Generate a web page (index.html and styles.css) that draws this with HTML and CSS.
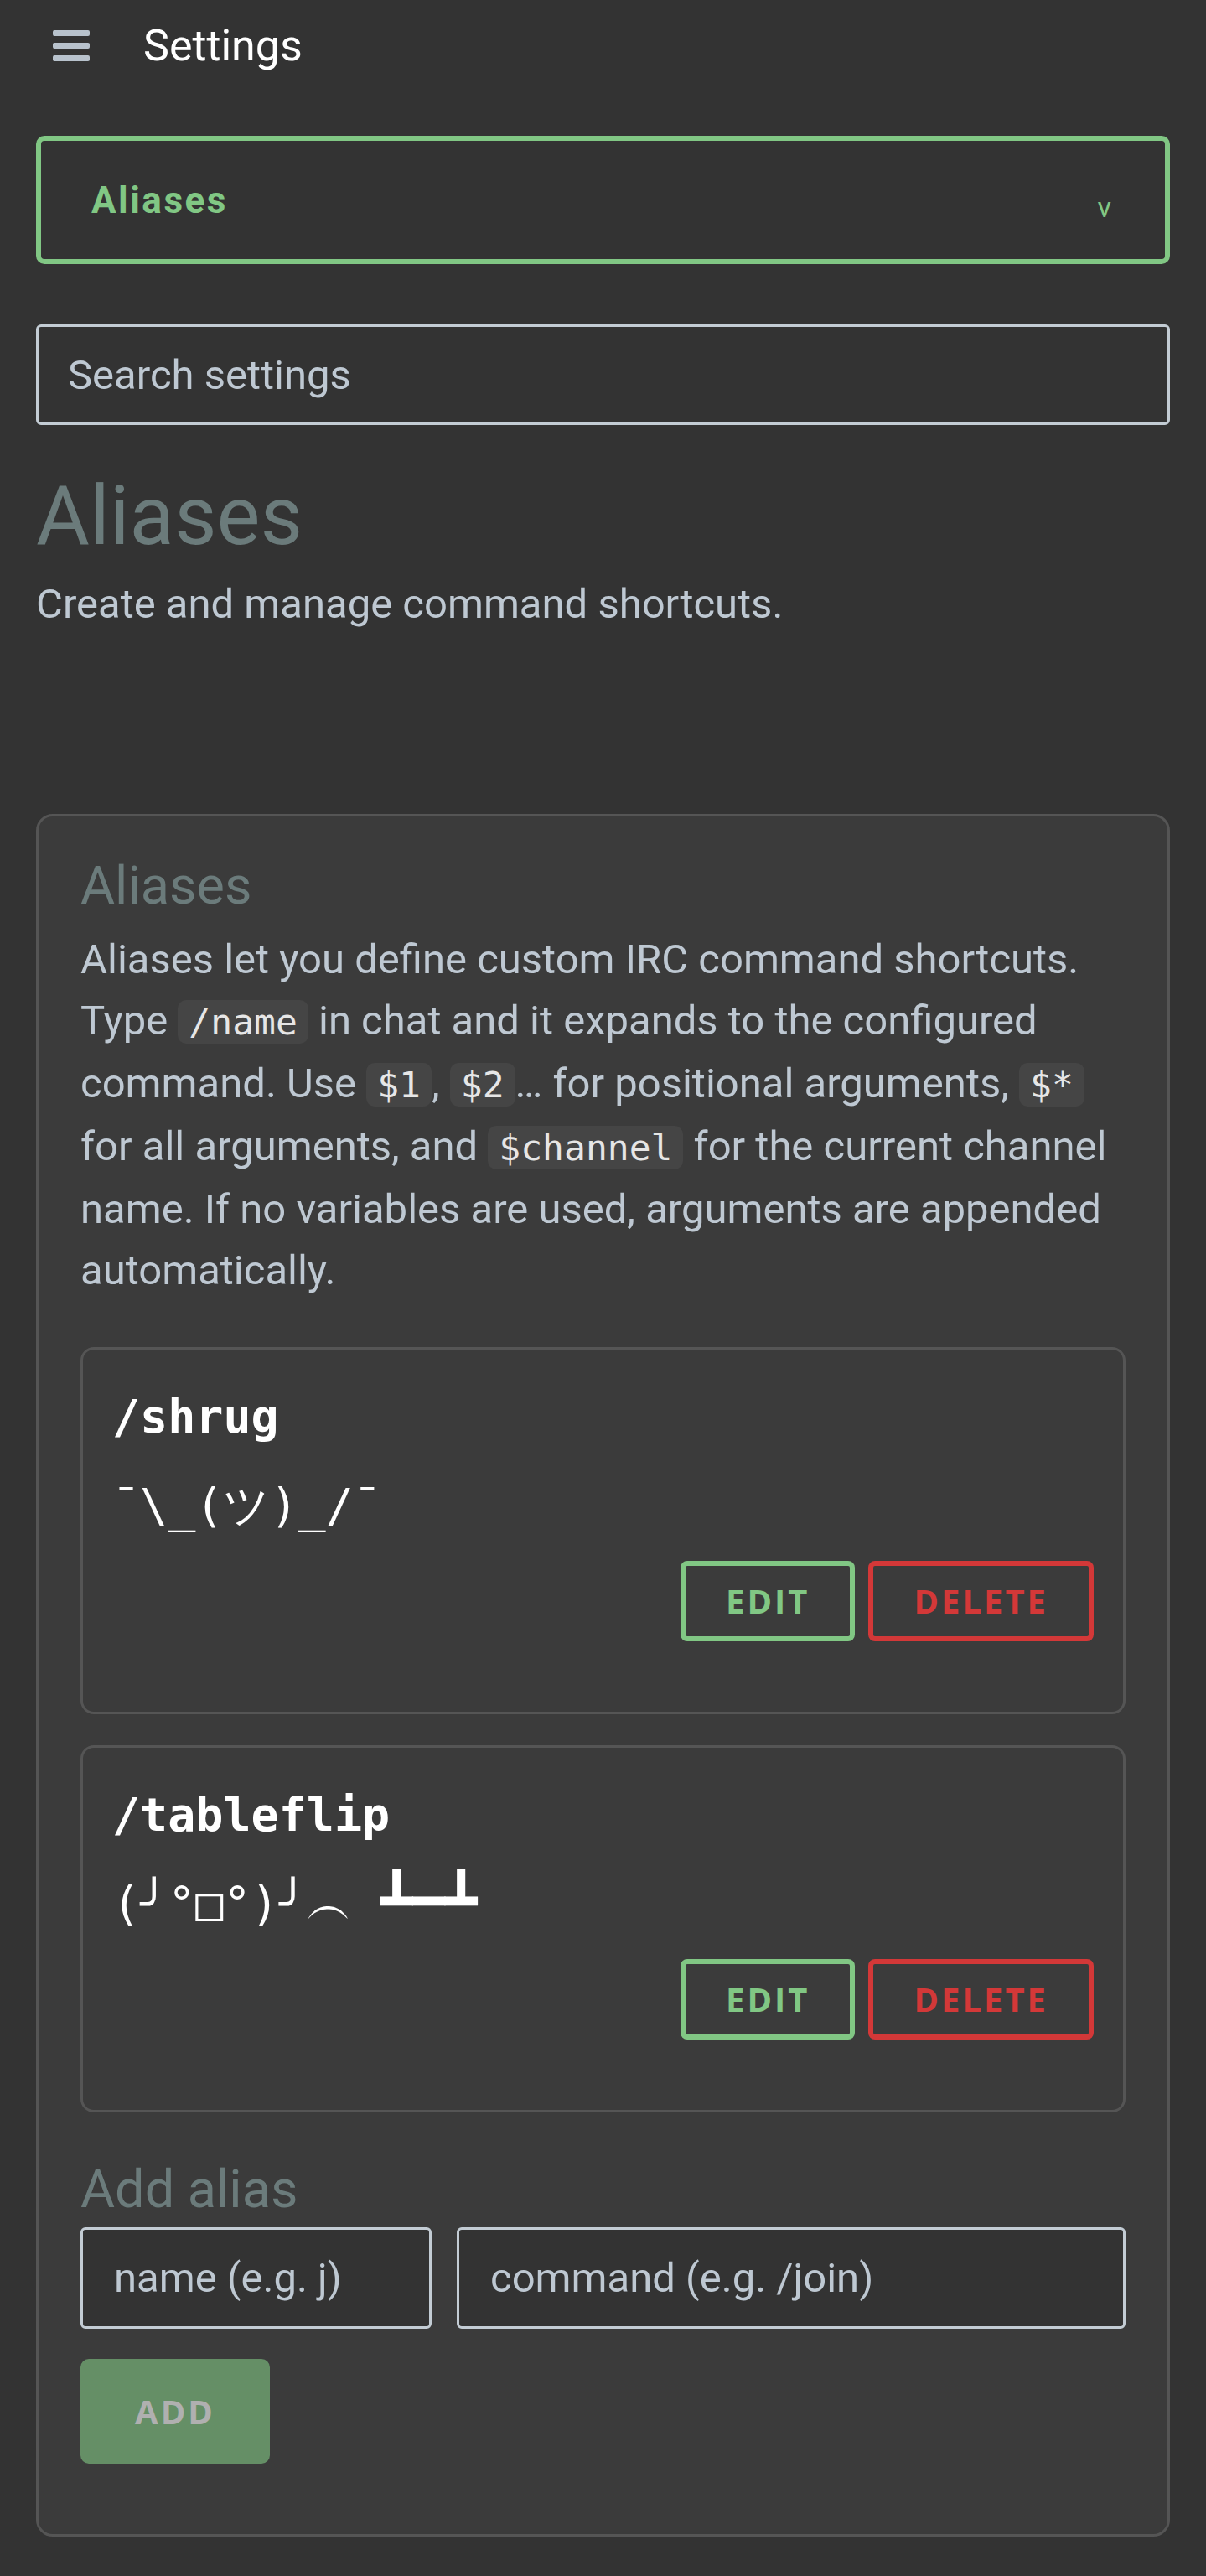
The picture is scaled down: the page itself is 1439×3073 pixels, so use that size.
FILE: index.html
```html
<!DOCTYPE html>
<html lang="en">
<head>
  <meta charset="UTF-8">
  <meta name="viewport" content="width=device-width, initial-scale=1.0">
  <title>Settings</title>
  <link rel="stylesheet" href="styles.css">
</head>
<body>
  <header class="topbar">
    <button type="button" class="menu-btn" aria-label="Menu">
      <svg width="44" height="37" viewBox="0 0 44 37">
        <rect x="0" y="0" width="44" height="7" rx="2"/>
        <rect x="0" y="15" width="44" height="7" rx="2"/>
        <rect x="0" y="30" width="44" height="7" rx="2"/>
      </svg>
    </button>
    <span class="topbar-title">Settings</span>
  </header>

  <main class="settings">
    <div class="section-picker">
      <span class="section-picker-label">Aliases</span>
      <span class="chevron">v</span>
    </div>

    <input type="text" class="search" placeholder="Search settings">

    <h1 class="page-title">Aliases</h1>
    <p class="page-sub">Create and manage command shortcuts.</p>

    <section class="panel">
      <h2 class="panel-title">Aliases</h2>
      <p class="panel-help">Aliases let you define custom IRC command shortcuts. Type <code>/name</code> in chat and it expands to the configured command. Use <code>$1</code>, <code>$2</code>… for positional arguments, <code>$*</code> for all arguments, and <code>$channel</code> for the current channel name. If no variables are used, arguments are appended automatically.</p>

      <div class="alias-list">
        <div class="alias">
          <div class="alias-name">/shrug</div>
          <div class="alias-cmd">¯\_(ツ)_/¯</div>
          <div class="alias-actions">
            <button type="button" class="btn btn-edit">Edit</button>
            <button type="button" class="btn btn-delete">Delete</button>
          </div>
        </div>
        <div class="alias">
          <div class="alias-name">/tableflip</div>
          <div class="alias-cmd">(╯°□°)╯︵ <span class="box-chars">┻━┻</span></div>
          <div class="alias-actions">
            <button type="button" class="btn btn-edit">Edit</button>
            <button type="button" class="btn btn-delete">Delete</button>
          </div>
        </div>
      </div>

      <h2 class="panel-title add-title">Add alias</h2>
      <div class="add-row">
        <input type="text" class="field field-name" placeholder="name (e.g. j)">
        <input type="text" class="field field-cmd" placeholder="command (e.g. /join)">
      </div>
      <button type="button" class="btn-add" disabled>Add</button>
    </section>
  </main>
</body>
</html>
```

FILE: styles.css
```css
body {
  margin: 0;
  background-color: #333333;
  font-family: Roboto, "Noto Sans", sans-serif;
  color: #bec8d2;
}

/* top bar */
.topbar {
  display: flex;
  align-items: center;
  height: 108px;
  padding: 0 63px;
  gap: 64px;
}
.menu-btn {
  display: flex;
  padding: 0;
  border: none;
  background: none;
  fill: #b8c2cc;
}
.topbar-title {
  font-size: 52px;
  color: #ffffff;
}

.settings {
  padding: 0 43px 47px;
}

/* section dropdown */
.section-picker {
  display: flex;
  align-items: center;
  justify-content: space-between;
  height: 153px;
  box-sizing: border-box;
  margin-top: 54px;
  padding: 0 64px 0 60px;
  border: 6px solid #81c784;
  border-radius: 10px;
}
.section-picker-label {
  font-size: 44px;
  font-weight: 700;
  letter-spacing: 2.5px;
  color: #81c784;
}
.chevron {
  padding-top: 16px;
  font-size: 34px;
  color: #81c784;
}

.search {
  display: block;
  width: 100%;
  height: 120px;
  box-sizing: border-box;
  margin-top: 72px;
  padding: 0 35px;
  border: 3px solid #c3ccd4;
  border-radius: 6px;
  background: #333333;
  font-family: inherit;
  font-size: 49px;
  color: #bec8d2;
}
.search::placeholder,
.field::placeholder {
  color: #bec8d2;
  opacity: 1;
}

.page-title {
  margin: 50px 0 0;
  font-size: 98px;
  font-weight: 400;
  line-height: 1.2;
  color: #6b7b7b;
}
.page-sub {
  margin: 11px 0 0;
  font-size: 49px;
  line-height: 69px;
}

/* aliases panel */
.panel {
  margin-top: 216px;
  padding: 47px 50px 84px;
  border: 3px solid #555555;
  border-radius: 20px;
  background-color: #3b3b3b;
}
.panel-title {
  margin: 0;
  font-size: 63px;
  font-weight: 400;
  line-height: 72px;
  color: #6b7b7b;
}
.panel-help {
  margin: 15px 0 0;
  font-size: 49px;
  line-height: 73px;
}
code {
  padding: 1px 13px;
  border-radius: 10px;
  background-color: #454545;
  font-family: "DejaVu Sans Mono", monospace;
  font-size: 43px;
  color: #e6e6e6;
}

.alias-list {
  display: flex;
  flex-direction: column;
  gap: 37px;
  margin-top: 55px;
}
.alias {
  padding: 45px 35px 84px;
  border: 3px solid #555555;
  border-radius: 16px;
}
.alias-name,
.alias-cmd {
  font-family: "DejaVu Sans Mono", monospace;
  font-size: 55px;
  line-height: 1.3;
  color: #ffffff;
}
.alias-name {
  font-weight: 700;
}
.alias-cmd {
  margin-top: 35px;
}
.box-chars {
  font-size: 64px;
  line-height: 1;
}
.alias-actions {
  display: flex;
  justify-content: flex-end;
  gap: 16px;
  margin-top: 29px;
}

.btn {
  height: 96px;
  padding: 0 48px;
  border: 6px solid;
  border-radius: 8px;
  background: none;
  font-family: "Open Sans", sans-serif;
  font-size: 40px;
  font-weight: 700;
  letter-spacing: 3px;
  text-transform: uppercase;
}
.btn-edit {
  border-color: #81c784;
  color: #81c784;
}
.btn-delete {
  border-color: #d33838;
  color: #d33838;
}

/* add form */
.add-title {
  margin-top: 56px;
}
.add-row {
  display: flex;
  gap: 30px;
  margin-top: 9px;
}
.field {
  height: 121px;
  box-sizing: border-box;
  padding: 0 37px;
  border: 3px solid #c3ccd4;
  border-radius: 6px;
  background: #333333;
  font-family: inherit;
  font-size: 49px;
  color: #bec8d2;
}
.field-name {
  width: 419px;
}
.field-cmd {
  flex: 1;
  min-width: 0;
}
.btn-add {
  display: block;
  width: 226px;
  height: 125px;
  margin-top: 36px;
  border: none;
  border-radius: 10px;
  background-color: #81c784;
  opacity: 0.6;
  font-family: "Open Sans", sans-serif;
  font-size: 40px;
  font-weight: 700;
  letter-spacing: 3px;
  text-transform: uppercase;
  color: #ffffff;
}
```
